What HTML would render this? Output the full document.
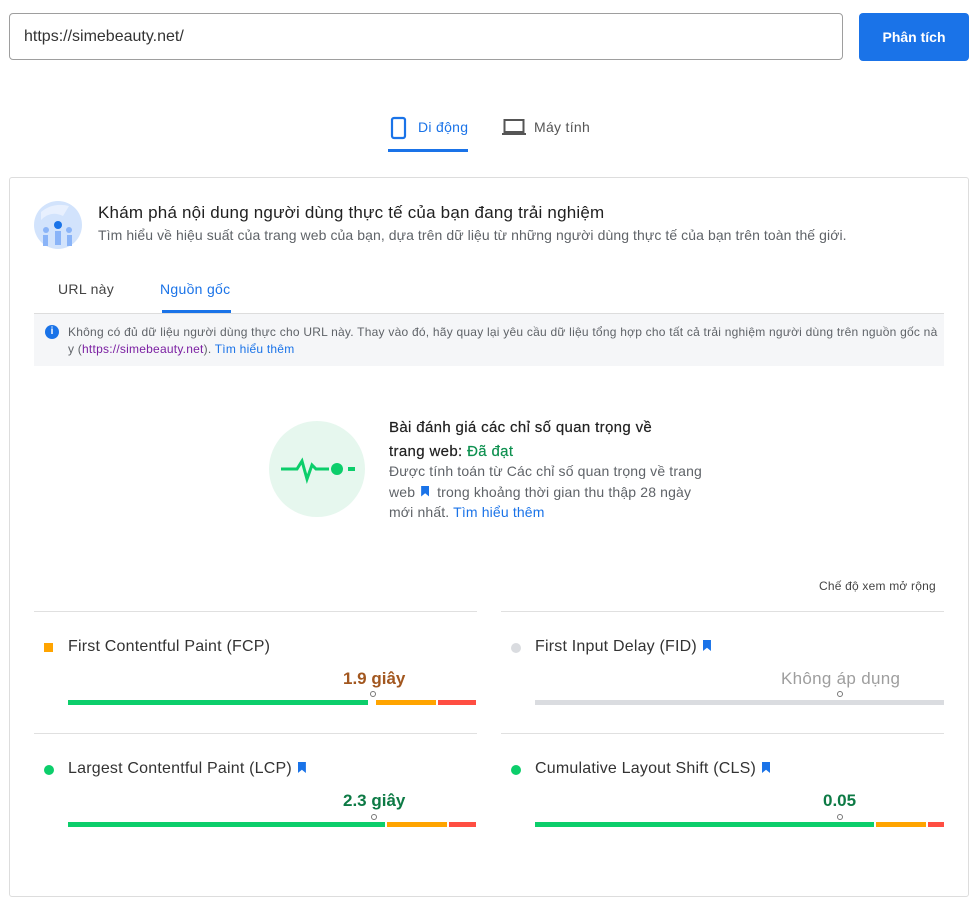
<!DOCTYPE html>
<html><head><meta charset="utf-8"><style>
*{margin:0;padding:0;box-sizing:border-box}
body{width:978px;height:831px;overflow:hidden;background:#fff;font-family:"Liberation Sans","Noto Sans CJK SC",sans-serif;position:relative;color:#212121}
.a{position:absolute;white-space:nowrap}
.bar{position:absolute;height:5px}
.mk{position:absolute;width:6px;height:6px;border:1px solid #777;border-radius:50%;background:#fff}
.hr{position:absolute;height:1px;background:#e0e0e0}
.mt{font-size:16px;color:#333;letter-spacing:0.2px}
.bm{display:inline-block;width:8px;height:11px;background:#1a73e8;clip-path:polygon(0 0,100% 0,100% 100%,50% 70%,0 100%);margin-left:6px;vertical-align:0}
</style></head><body>
<div class="a" style="left:9px;top:13px;width:834px;height:47px;border:1px solid #9e9e9e;border-radius:4px"></div>
<div class="a" style="left:24px;top:28px;font-size:16px;color:#333">https://simebeauty.net/</div>
<div class="a" style="left:859px;top:13px;width:110px;height:48px;background:#1a73e8;border-radius:4px;color:#fff;font-weight:bold;font-size:14px;text-align:center;line-height:48px">Phân tích</div>

<svg class="a" style="left:389px;top:116px" width="20" height="24" viewBox="0 0 20 24"><rect x="3" y="2" width="13" height="20" rx="2" fill="none" stroke="#1a73e8" stroke-width="2.2"/></svg>
<div class="a" style="left:418px;top:119px;font-size:14px;color:#1a73e8;letter-spacing:0.3px">Di động</div>
<div class="a" style="left:388px;top:149px;width:80px;height:3px;background:#1a73e8"></div>
<svg class="a" style="left:502px;top:118px" width="24" height="20" viewBox="0 0 24 20"><rect x="2.5" y="2" width="19" height="12" fill="none" stroke="#555" stroke-width="2"/><rect x="0" y="15" width="24" height="2" fill="#555"/></svg>
<div class="a" style="left:534px;top:119px;font-size:14px;color:#555;letter-spacing:0.3px">Máy tính</div>

<div class="a" style="left:9px;top:177px;width:960px;height:720px;border:1px solid #ddd;border-radius:3px"></div>

<svg class="a" style="left:33px;top:200px" width="50" height="50" viewBox="0 0 50 50"><circle cx="25" cy="25" r="24" fill="#d2e3fc"/><path d="M8 12 Q20 2 36 6 L30 16 Q18 10 8 20Z" fill="#e8f0fe"/><circle cx="25" cy="25" r="4" fill="#1a73e8"/><rect x="22" y="31" width="6" height="14" fill="#8ab4f8"/><circle cx="13" cy="30" r="3" fill="#8ab4f8"/><rect x="10" y="35" width="5" height="11" fill="#8ab4f8"/><circle cx="36" cy="30" r="3" fill="#8ab4f8"/><rect x="34" y="35" width="5" height="11" fill="#8ab4f8"/></svg>
<div class="a" style="left:98px;top:203px;font-size:17px;color:#212121;letter-spacing:0.2px">Khám phá nội dung người dùng thực tế của bạn đang trải nghiệm</div>
<div class="a" style="left:98px;top:227px;font-size:14px;color:#5f6368;letter-spacing:0.08px">Tìm hiểu về hiệu suất của trang web của bạn, dựa trên dữ liệu từ những người dùng thực tế của bạn trên toàn thế giới.</div>

<div class="a" style="left:58px;top:281px;font-size:14px;color:#444;letter-spacing:0.3px">URL này</div>
<div class="a" style="left:160px;top:281px;font-size:14px;color:#1a73e8;letter-spacing:0.3px">Nguồn gốc</div>
<div class="a" style="left:162px;top:310px;width:69px;height:3px;background:#1a73e8"></div>
<div class="a" style="left:34px;top:313px;width:910px;height:53px;background:#f5f6f8;border-top:1px solid #ddd"></div>
<div class="a" style="left:45px;top:325px;width:14px;height:14px;border-radius:50%;background:#1a73e8;color:#fff;font-size:10px;font-weight:bold;text-align:center;line-height:14px">i</div>
<div class="a" style="left:68px;top:324px;font-size:12px;color:#5f6368;line-height:17px;letter-spacing:0.23px">Không có đủ dữ liệu người dùng thực cho URL này. Thay vào đó, hãy quay lại yêu cầu dữ liệu tổng hợp cho tất cả trải nghiệm người dùng trên nguồn gốc nà<br>y (<span style="color:#7b1fa2">https://simebeauty.net</span>). <span style="color:#1a73e8">Tìm hiểu thêm</span></div>

<div class="a" style="left:269px;top:421px;width:96px;height:96px;border-radius:50%;background:#e6f7ee"></div>
<svg class="a" style="left:269px;top:421px" width="96" height="96" viewBox="0 0 96 96"><path d="M12 48 H28 L33 40 L38 58 L43 44 L47 48 H60" fill="none" stroke="#0cce6b" stroke-width="3"/><circle cx="68" cy="48" r="6" fill="#0cce6b"/><rect x="79" y="46" width="7" height="4" fill="#0cce6b"/></svg>
<div class="a" style="left:389px;top:416px;font-size:15px;color:#212121;line-height:24px;letter-spacing:0.35px;-webkit-text-stroke:0.2px #212121">Bài đánh giá các chỉ số quan trọng về<br>trang web: <span style="color:#0d904f;-webkit-text-stroke:0.2px #0d904f">Đã đạt</span></div>
<div class="a" style="left:389px;top:461px;font-size:14px;color:#5f6368;line-height:20.5px;letter-spacing:0.15px">Được tính toán từ Các chỉ số quan trọng về trang<br>web<span class="bm" style="margin-right:8px"></span>trong khoảng thời gian thu thập 28 ngày<br>mới nhất. <span style="color:#1a73e8">Tìm hiểu thêm</span></div>

<div class="a" style="left:819px;top:579px;font-size:12px;color:#444;letter-spacing:0.2px">Chế độ xem mở rộng</div>

<div class="hr" style="left:34px;top:611px;width:443px"></div>
<div class="hr" style="left:501px;top:611px;width:443px"></div>
<div class="hr" style="left:34px;top:733px;width:443px"></div>
<div class="hr" style="left:501px;top:733px;width:443px"></div>

<div class="a" style="left:44px;top:643px;width:9px;height:9px;background:#ffa400"></div>
<div class="a mt" style="left:68px;top:638px">First Contentful Paint (FCP)</div>
<div class="a" style="left:343px;top:669px;font-size:17px;color:#a2571f;font-weight:bold">1.9 giây</div>
<div class="bar" style="left:68px;top:700px;width:300px;background:#0cce6b"></div>
<div class="bar" style="left:376px;top:700px;width:60px;background:#ffa400"></div>
<div class="bar" style="left:438px;top:700px;width:38px;background:#ff4e42"></div>
<div class="mk" style="left:370px;top:691px"></div>

<div class="a" style="left:511px;top:643px;width:10px;height:10px;border-radius:50%;background:#dadce0"></div>
<div class="a mt" style="left:535px;top:638px">First Input Delay (FID)<span class="bm"></span></div>
<div class="a" style="left:781px;top:669px;font-size:17px;color:#9e9e9e;letter-spacing:0.3px">Không áp dụng</div>
<div class="bar" style="left:535px;top:700px;width:409px;background:#dadce0"></div>
<div class="mk" style="left:837px;top:691px"></div>

<div class="a" style="left:44px;top:765px;width:10px;height:10px;border-radius:50%;background:#0cce6b"></div>
<div class="a mt" style="left:68px;top:760px">Largest Contentful Paint (LCP)<span class="bm"></span></div>
<div class="a" style="left:343px;top:791px;font-size:17px;color:#0d7a45;font-weight:bold">2.3 giây</div>
<div class="bar" style="left:68px;top:822px;width:317px;background:#0cce6b"></div>
<div class="bar" style="left:387px;top:822px;width:60px;background:#ffa400"></div>
<div class="bar" style="left:449px;top:822px;width:27px;background:#ff4e42"></div>
<div class="mk" style="left:371px;top:814px"></div>

<div class="a" style="left:511px;top:765px;width:10px;height:10px;border-radius:50%;background:#0cce6b"></div>
<div class="a mt" style="left:535px;top:760px">Cumulative Layout Shift (CLS)<span class="bm"></span></div>
<div class="a" style="left:823px;top:791px;font-size:17px;color:#0d7a45;font-weight:bold">0.05</div>
<div class="bar" style="left:535px;top:822px;width:339px;background:#0cce6b"></div>
<div class="bar" style="left:876px;top:822px;width:50px;background:#ffa400"></div>
<div class="bar" style="left:928px;top:822px;width:16px;background:#ff4e42"></div>
<div class="mk" style="left:837px;top:814px"></div>
</body></html>
